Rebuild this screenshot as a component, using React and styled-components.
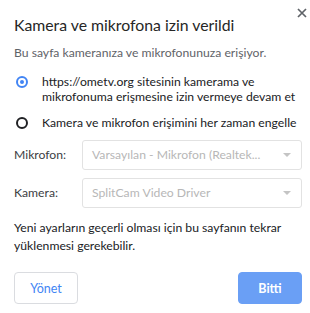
import React, { useState } from "react";
import styled, { createGlobalStyle } from "styled-components";

const GlobalStyle = createGlobalStyle`
  html, body {
    margin: 0;
    padding: 0;
    background: #ffffff;
  }
  body {
    font-family: Lato, "Noto Sans", sans-serif;
  }
`;

const devices = {
  mic: "Varsayılan - Mikrofon (Realtek...",
  cam: "SplitCam Video Driver",
};

export default function App() {
  const [choice, setChoice] = useState("allow");

  return (
    <Dialog>
      <GlobalStyle />
      <Header>
        <Title>Kamera ve mikrofona izin verildi</Title>
        <CloseButton aria-label="Kapat">
          <svg width="10" height="10" viewBox="0 0 10 10">
            <path d="M1 1 L9 9 M9 1 L1 9" stroke="#5f6368" strokeWidth="1.7" />
          </svg>
        </CloseButton>
      </Header>
      <Subtitle>Bu sayfa kameranıza ve mikrofonunuza erişiyor.</Subtitle>

      <Options>
        <Option onClick={() => setChoice("allow")}>
          <Radio $checked={choice === "allow"} />
          <OptionText>
            https://ometv.org sitesinin kamerama ve
            <br />
            mikrofonuma erişmesine izin vermeye devam et
          </OptionText>
        </Option>
        <Option onClick={() => setChoice("block")}>
          <Radio $checked={choice === "block"} />
          <OptionText>Kamera ve mikrofon erişimini her zaman engelle</OptionText>
        </Option>
      </Options>

      <Fields>
        <Label>Mikrofon:</Label>
        <Select>
          <SelectValue>{devices.mic}</SelectValue>
          <Caret />
        </Select>
        <Label>Kamera:</Label>
        <Select>
          <SelectValue>{devices.cam}</SelectValue>
          <Caret />
        </Select>
      </Fields>

      <Note>
        Yeni ayarların geçerli olması için bu sayfanın tekrar
        <br />
        yüklenmesi gerekebilir.
      </Note>

      <Footer>
        <Button>Yönet</Button>
        <Button $primary>Bitti</Button>
      </Footer>
    </Dialog>
  );
}

const Dialog = styled.div`
  width: 310px;
  height: 313px;
  box-sizing: border-box;
  padding: 0 8px 0 14px;
  background: #fff;
  color: #202124;
  overflow: hidden;
  font-size: 12.2px;
`;

const Header = styled.div`
  display: flex;
  justify-content: space-between;
  align-items: flex-start;
`;

const Title = styled.h1`
  margin: 15px 0 0;
  font-size: 15.8px;
  line-height: 20px;
  font-weight: 400;
  color: #262626;
`;

const CloseButton = styled.button`
  margin: 8px -5px 0 0;
  padding: 0;
  border: none;
  background: none;
  display: flex;
  cursor: pointer;
`;

const Subtitle = styled.p`
  margin: 10px 0 0;
  font-size: 12.2px;
  line-height: 16px;
  color: #5f6368;
`;

const Options = styled.div`
  display: flex;
  flex-direction: column;
  gap: 11px;
  margin-top: 13px;
`;

const Option = styled.div`
  display: flex;
  align-items: flex-start;
  gap: 14px;
  cursor: pointer;
`;

const Radio = styled.span`
  flex: none;
  width: 12px;
  height: 12px;
  margin: 1.5px 0 0 2px;
  box-sizing: border-box;
  border-radius: 50%;
  border: 2px solid ${(p) => (p.$checked ? "#4285f4" : "#202124")};
  display: flex;
  align-items: center;
  justify-content: center;

  &::after {
    content: "";
    width: 4px;
    height: 4px;
    border-radius: 50%;
    background: ${(p) => (p.$checked ? "#4285f4" : "transparent")};
  }
`;

const OptionText = styled.span`
  font-size: 12.2px;
  line-height: 15px;
  color: #202124;
  white-space: nowrap;
`;

const Fields = styled.div`
  display: grid;
  grid-template-columns: 68px 220px;
  row-gap: 8px;
  align-items: center;
  margin-top: 10px;
`;

const Label = styled.span`
  font-size: 12.2px;
  line-height: 16px;
  color: #3c4043;
`;

const Select = styled.div`
  height: 30px;
  box-sizing: border-box;
  border: 1px solid #e2e2e2;
  border-radius: 3px;
  display: flex;
  align-items: center;
  justify-content: space-between;
  padding: 0 10px 0 9px;
`;

const SelectValue = styled.span`
  font-size: 12.2px;
  line-height: 16px;
  color: #b7b7b7;
  white-space: nowrap;
`;

const Caret = styled.span`
  width: 0;
  height: 0;
  border-left: 4px solid transparent;
  border-right: 4px solid transparent;
  border-top: 4px solid #c4c4c4;
`;

const Note = styled.p`
  margin: 11px 0 0;
  font-size: 12.2px;
  line-height: 18px;
  color: #202124;
  white-space: nowrap;
`;

const Footer = styled.div`
  display: flex;
  justify-content: space-between;
  margin-top: 17px;
`;

const Button = styled.button`
  width: 64px;
  height: 32px;
  box-sizing: border-box;
  border-radius: 4px;
  font-family: inherit;
  font-size: 12.5px;
  cursor: pointer;
  border: 1px solid ${(p) => (p.$primary ? "#6a9ff5" : "#dadce0")};
  background: ${(p) => (p.$primary ? "#6a9ff5" : "#fff")};
  color: ${(p) => (p.$primary ? "#fff" : "#4285f4")};
  font-weight: ${(p) => (p.$primary ? 700 : 400)};
`;
